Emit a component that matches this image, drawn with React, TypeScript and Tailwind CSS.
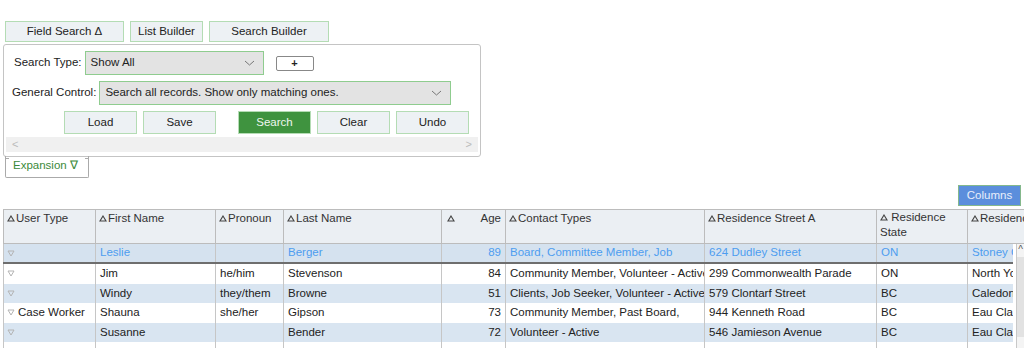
import React from 'react';

interface Column {
  key: string;
  label: string;
  width: number;
  align?: 'right';
  wrap?: boolean;
}

interface Row {
  userType: string;
  first: string;
  pronoun: string;
  last: string;
  age: number;
  contact: string;
  street: string;
  state: string;
  city: string;
}

const columns: Column[] = [
  { key: 'userType', label: 'User Type', width: 92 },
  { key: 'first', label: 'First Name', width: 120 },
  { key: 'pronoun', label: 'Pronoun', width: 68 },
  { key: 'last', label: 'Last Name', width: 158 },
  { key: 'age', label: 'Age', width: 64, align: 'right' },
  { key: 'contact', label: 'Contact Types', width: 199 },
  { key: 'street', label: 'Residence Street A', width: 172 },
  { key: 'state', label: 'Residence State', width: 91, wrap: true },
  { key: 'city', label: 'Residence City', width: 46 },
];

const rows: Row[] = [
  { userType: '', first: 'Leslie', pronoun: '', last: 'Berger', age: 89, contact: 'Board, Committee Member, Job', street: '624 Dudley Street', state: 'ON', city: 'Stoney Creek' },
  { userType: '', first: 'Jim', pronoun: 'he/him', last: 'Stevenson', age: 84, contact: 'Community Member, Volunteer - Active', street: '299 Commonwealth Parade', state: 'ON', city: 'North York' },
  { userType: '', first: 'Windy', pronoun: 'they/them', last: 'Browne', age: 51, contact: 'Clients, Job Seeker, Volunteer - Active', street: '579 Clontarf Street', state: 'BC', city: 'Caledonia' },
  { userType: 'Case Worker', first: 'Shauna', pronoun: 'she/her', last: 'Gipson', age: 73, contact: 'Community Member, Past Board,', street: '944 Kenneth Road', state: 'BC', city: 'Eau Claire' },
  { userType: '', first: 'Susanne', pronoun: '', last: 'Bender', age: 72, contact: 'Volunteer - Active', street: '546 Jamieson Avenue', state: 'BC', city: 'Eau Claire' },
  { userType: '', first: '', pronoun: '', last: '', age: 0, contact: '', street: '', state: '', city: '' },
];

const UpTri = () => (
  <svg width="8" height="7" viewBox="0 0 8 7" className="inline-block shrink-0">
    <path d="M4 1 L7 6 L1 6 Z" fill="none" stroke="#444" strokeWidth="1.1" />
  </svg>
);

const DownTri = () => (
  <svg width="8" height="7" viewBox="0 0 8 7" className="inline-block shrink-0">
    <path d="M1 1 L7 1 L4 6 Z" fill="none" stroke="#b4b4b4" strokeWidth="1" />
  </svg>
);

const Chevron = () => (
  <svg width="11" height="6" viewBox="0 0 11 6">
    <path d="M1 1 L5.5 5 L10 1" fill="none" stroke="#777" strokeWidth="1" />
  </svg>
);

const TopButton = ({ label, w }: { label: string; w: number }) => (
  <button
    className="h-[21px] border border-[#b4dcb4] bg-[#edf1f4] text-[#222] flex items-center justify-center"
    style={{ width: w }}
  >
    {label}
  </button>
);

const ActionButton = ({ label, primary }: { label: string; primary?: boolean }) => (
  <button
    className={
      primary
        ? 'h-[23px] w-[73px] border border-[#b4dcb4] bg-[#3f933f] text-[#eef6ee]'
        : 'h-[23px] w-[73px] border border-[#b4dcb4] bg-[#edf1f4] text-[#222]'
    }
  >
    {label}
  </button>
);

export default function App() {
  return (
    <div className="w-[1024px] h-[348px] overflow-hidden bg-white text-[11.5px] text-[#222] font-['Liberation_Sans',Arial,sans-serif]">
      {/* Tab buttons */}
      <div className="flex gap-[6px] pl-[5px] pt-[21px]">
        <TopButton label="Field Search Δ" w={119} />
        <TopButton label="List Builder" w={73} />
        <TopButton label="Search Builder" w={120} />
      </div>

      {/* Search panel */}
      <div className="ml-[3px] mt-[2px] w-[478px] h-[113px] border border-[#c4c4c4] rounded-[3px] flex flex-col">
        <div className="flex items-center pt-[6px]">
          <span className="pl-[10px] pr-[3px]">Search Type:</span>
          <div className="w-[179px] h-[24px] border border-[#8fcc8f] bg-[#e3e3e3] flex items-center justify-between pl-[5px] pr-[8px]">
            <span>Show All</span>
            <Chevron />
          </div>
          <button className="ml-[12px] w-[38px] h-[15px] border border-[#888] rounded-[2px] bg-white flex items-center justify-center text-[11px] leading-none font-bold">
            +
          </button>
        </div>
        <div className="flex items-center pt-[6px]">
          <span className="pl-[8px] pr-[3px]">General Control:</span>
          <div className="w-[352px] h-[24px] border border-[#8fcc8f] bg-[#e3e3e3] flex items-center justify-between pl-[5px] pr-[8px]">
            <span>Search all records. Show only matching ones.</span>
            <Chevron />
          </div>
        </div>
        <div className="flex pt-[6px] pl-[60px] gap-[6px]">
          <ActionButton label="Load" />
          <ActionButton label="Save" />
          <div className="w-[10px]" />
          <ActionButton label="Search" primary />
          <ActionButton label="Clear" />
          <ActionButton label="Undo" />
        </div>
        <div className="mx-[2px] mt-[3px] h-[15px] bg-[#f0f0f0] flex items-center justify-between px-[6px] text-[#bbb] text-[11px]">
          <span>&lt;</span>
          <span>&gt;</span>
        </div>
      </div>

      {/* Expansion */}
      <div className="relative ml-[5px] -mt-[1px] w-[84px] h-[22px] border-l border-r border-b border-[#aaa] rounded-b-[2px]">
        <div className="absolute left-0 top-[2px] w-[3px] border-t border-[#aaa]" />
        <div className="absolute right-0 top-[2px] w-[3px] border-t border-[#aaa]" />
        <span className="absolute left-[7px] top-[1px] text-[#3b8a3b]">Expansion ∇</span>
      </div>

      {/* Columns button */}
      <div className="flex justify-end pr-[3px] mt-[7px]">
        <button className="w-[63px] h-[21px] bg-[#5b8edc] border border-[#84b88c] text-[#e9effb]">Columns</button>
      </div>

      {/* Table */}
      <div className="ml-[3px] mt-[3px] w-[1021px] overflow-hidden">
        <div className="flex h-[35px] border-t border-b border-[#bcbcbc] bg-[#ebeff3]">
          {columns.map((c, i) => (
            <div
              key={c.key}
              className={
                i === columns.length - 1
                  ? 'flex-1 border-l border-[#bcbcbc] px-[3px] text-[#333] overflow-hidden whitespace-nowrap'
                  : 'shrink-0 border-l border-[#bcbcbc] px-[3px] text-[#333] overflow-hidden'
              }
              style={{ width: i === columns.length - 1 ? undefined : c.width }}
            >
              {c.align === 'right' ? (
                <div className="flex items-center justify-between pl-[2px] pr-[1px]">
                  <UpTri />
                  <span>{c.label}</span>
                </div>
              ) : (
                <div className={c.wrap ? 'leading-[15px]' : 'flex items-center gap-[1px] whitespace-nowrap'}>
                  <UpTri />
                  {c.wrap ? ' ' : null}
                  <span>{c.label}</span>
                </div>
              )}
            </div>
          ))}
        </div>

        <div className="flex">
          <div className="w-[1010px] shrink-0">
            {rows.map((r, ri) => {
              const selected = ri === 0;
              const shaded = ri % 2 === 0;
              const rowCls = selected
                ? 'flex h-[20px] bg-[#d5e2ef] text-[#4d9df0] border-b-2 border-[#6e6e6e]'
                : shaded
                  ? 'flex h-[19.5px] bg-[#d9e5f1]'
                  : 'flex h-[19.5px] bg-white';
              const values = [
                r.userType,
                r.first,
                r.pronoun,
                r.last,
                r.age ? String(r.age) : '',
                r.contact,
                r.street,
                r.state,
                r.city,
              ];
              const empty = r.first === '';
              return (
                <div key={ri} className={rowCls}>
                  {columns.map((c, ci) => (
                    <div
                      key={c.key}
                      className={
                        c.align === 'right'
                          ? 'shrink-0 border-l border-[#c6c6c6] px-[4px] flex items-center justify-end whitespace-nowrap overflow-hidden'
                          : ci === 0
                            ? 'shrink-0 border-l border-[#c6c6c6] pl-[3px] pr-[4px] flex items-center gap-[3px] whitespace-nowrap overflow-hidden'
                            : 'shrink-0 border-l border-[#c6c6c6] pl-[4px] pr-[1px] flex items-center whitespace-nowrap overflow-hidden'
                      }
                      style={{ width: c.width }}
                    >
                      {ci === 0 && !empty ? <DownTri /> : null}
                      <span>{values[ci]}</span>
                    </div>
                  ))}
                </div>
              );
            })}
          </div>
          <div className="flex-1 ml-[3px] border-l border-[#c8c8c8] bg-[#f4f4f4] flex flex-col items-center">
            <span className="text-[10px] leading-[12px] text-[#555]">^</span>
            <div className="mt-[1px] w-full h-[80px] bg-[#e2e2e2]" />
          </div>
        </div>
      </div>
    </div>
  );
}
